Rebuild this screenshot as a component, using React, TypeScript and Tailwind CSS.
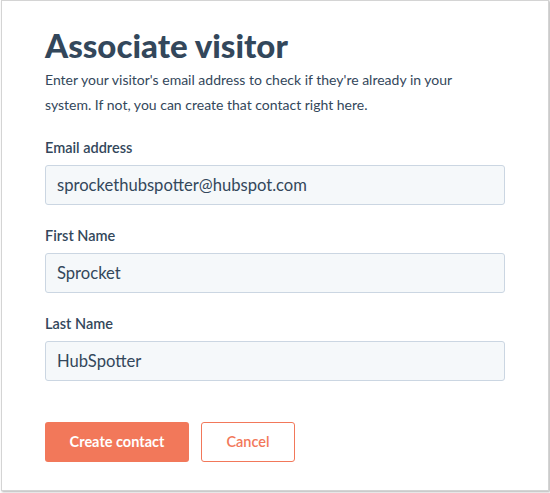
import { useState } from "react";

function Field({
  label,
  value,
  onChange,
}: {
  label: string;
  value: string;
  onChange: (v: string) => void;
}) {
  return (
    <div className="flex flex-col">
      <label className="text-[14.5px] leading-[20px] font-semibold text-[#33475b]">
        {label}
      </label>
      <input
        value={value}
        onChange={(e) => onChange(e.target.value)}
        className="mt-[7px] h-[40px] w-[460px] rounded-[3px] border border-[#cbd6e2] bg-[#f5f8fa] px-[11px] text-[16.6px] text-[#33475b] outline-none"
      />
    </div>
  );
}

export default function App() {
  const [email, setEmail] = useState("sprockethubspotter@hubspot.com");
  const [firstName, setFirstName] = useState("Sprocket");
  const [lastName, setLastName] = useState("HubSpotter");

  return (
    <div
      className="h-[493px] w-[550px] bg-white"
      style={{ fontFamily: "Lato, 'Noto Sans', sans-serif" }}
    >
      <div className="ml-[1px] h-[491px] w-[548px] border border-[#d4d4d4] bg-white px-[43px] pt-[22px] shadow-[1px_1px_2px_rgba(0,0,0,0.3)]">
        <h1 className="text-[33px] leading-[44px] font-black text-[#33475b]">
          Associate visitor
        </h1>
        <p className="max-w-[420px] text-[14px] leading-[25px] text-[#33475b]">
          Enter your visitor's email address to check if they're already in your
          system. If not, you can create that contact right here.
        </p>

        <div className="mt-[21px] flex flex-col gap-[21px]">
          <Field label="Email address" value={email} onChange={setEmail} />
          <Field label="First Name" value={firstName} onChange={setFirstName} />
          <Field label="Last Name" value={lastName} onChange={setLastName} />
        </div>

        <div className="mt-[41px] flex gap-[12px]">
          <button className="h-[40px] w-[144px] rounded-[3px] bg-[#f2785a] text-[14.5px] font-bold text-white">
            Create contact
          </button>
          <button className="h-[40px] w-[94px] rounded-[3px] border border-[#f2785a] bg-white text-[14.5px] font-semibold text-[#f2785a]">
            Cancel
          </button>
        </div>
      </div>
    </div>
  );
}
